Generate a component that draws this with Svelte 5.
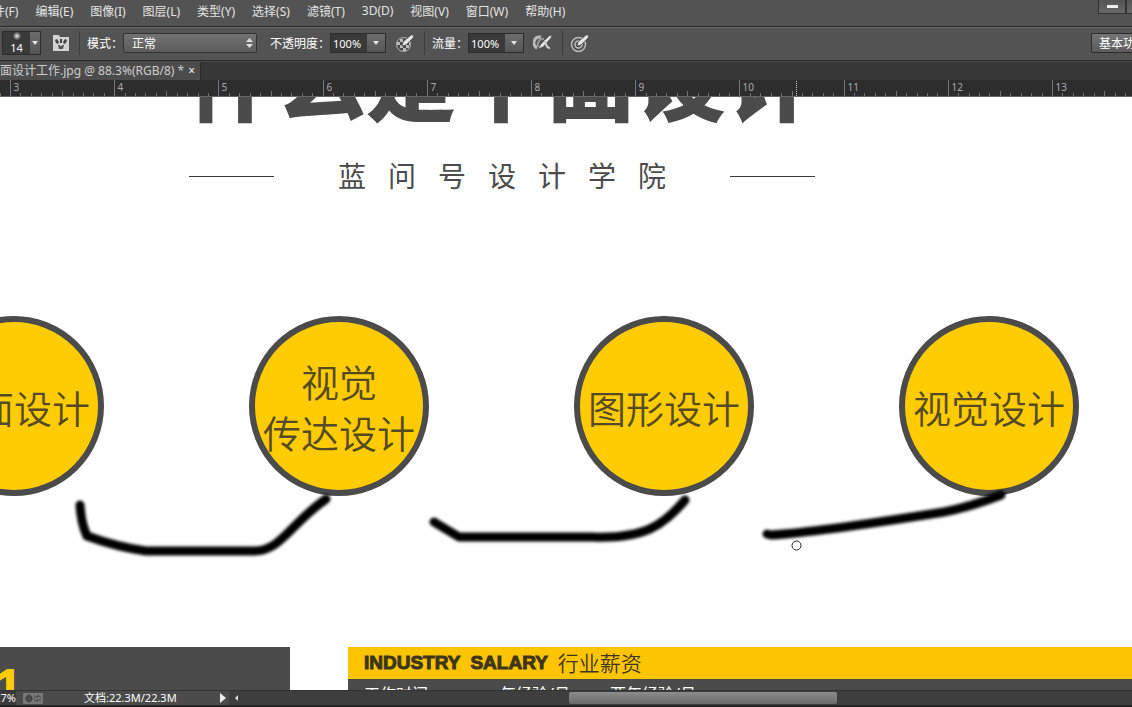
<script lang="ts">
	// Menu bar entries
	const menus: string[] = [
		'文件(F)',
		'编辑(E)',
		'图像(I)',
		'图层(L)',
		'类型(Y)',
		'选择(S)',
		'滤镜(T)',
		'3D(D)',
		'视图(V)',
		'窗口(W)',
		'帮助(H)'
	];

	let mode: string = $state('正常');
	let opacity: string = $state('100%');
	let flow: string = $state('100%');

	// Ruler: one unit at 88.3% zoom
	const unit = 104.2;
	const origin = 10.5;
	const units: number[] = [2, 3, 4, 5, 6, 7, 8, 9, 10, 11, 12, 13];
	const minor: number[] = [1, 2, 3, 4, 5, 6, 7, 8, 9];

	function rulerX(value: number) {
		return Math.round(origin + (value - 3) * unit - 0.5) + 0.5;
	}

	// Lines of text in each circle of the artwork
	const circles: string[][] = [['平面设计'], ['视觉', '传达设计'], ['图形设计'], ['视觉设计']];

	const school: string[] = [...'蓝问号设计学院'];
</script>

<div class="app">
	<header class="menubar">
		<nav>
			{#each menus as menu}
				<button class="menu">{menu}</button>
			{/each}
		</nav>
		<div class="window-buttons">
			<button aria-label="最小化"><i></i></button>
			<button aria-label="还原"></button>
		</div>
	</header>

	<div class="options">
		<button class="brush" aria-label="画笔预设">
			<span class="tip"><i></i>14</span>
			<span class="drop"></span>
		</button>
		<button class="icon panel-icon" aria-label="切换画笔面板">
			<svg width="18" height="18" viewBox="0 0 18 18">
				<path d="M1 1h6l1 2h9v14H1z" fill="#d2d2d2" />
				<path d="M3 6l2-1 2 3-1 2-2-1zM8 5h2v4H8zM13 5l2 1-1 3-2 1-1-2z" fill="#444" />
				<path d="M6 11h2v1h2v-1h2l-1 4H7z" fill="#555" />
			</svg>
		</button>
		<span class="separator"></span>
		<label for="mode">模式：</label>
		<span class="select">
			<select id="mode" bind:value={mode}>
				<option>正常</option>
				<option>溶解</option>
			</select>
			<svg width="7" height="10" viewBox="0 0 7 10">
				<path d="M0 4l3.5-4L7 4zM0 6h7l-3.5 4z" fill="#ddd" />
			</svg>
		</span>
		<label class="opacity-label" for="opacity">不透明度：</label>
		<span class="field">
			<input id="opacity" bind:value={opacity} />
			<button class="drop" aria-label="不透明度滑块"></button>
		</span>
		<button class="icon" aria-label="绘图板压力控制不透明度">
			<svg width="20" height="20" viewBox="0 0 20 20">
				<circle cx="8.5" cy="11.5" r="7" fill="#4a4a4a" stroke="#bbb" />
				<path
					d="M5 6h3v3H5zM11 6h3v3h-3zM2 9h3v3H2zM8 9h3v3H8zM14 9h1v3h-1zM5 12h3v3H5zM11 12h3v3h-3zM8 15h3v3H8z"
					fill="#bbb"
				/>
				<path d="M7 13l1-4 8-7 3 0-1 3-7 7z" fill="#e4e4e4" stroke="#444" stroke-width=".7" />
			</svg>
		</button>
		<span class="separator"></span>
		<label for="flow">流量：</label>
		<span class="field">
			<input id="flow" bind:value={flow} />
			<button class="drop" aria-label="流量滑块"></button>
		</span>
		<button class="icon" aria-label="启用喷枪模式">
			<svg width="20" height="20" viewBox="0 0 20 20" fill="none">
				<path d="M8 4C0 3-1 13 4 15" stroke="#bbb" stroke-width="3" />
				<path d="M11 6C6 5 4 10 5 14" stroke="#999" stroke-width="2" />
				<path d="M5 16l3-5 8-8 3-1-1 3-8 9z" fill="#e4e4e4" stroke="#444" stroke-width=".6" />
				<path d="M11 8c3 1 1 7 6 7" stroke="#ccc" stroke-width="2" />
			</svg>
		</button>
		<span class="separator"></span>
		<button class="icon size-icon" aria-label="绘图板压力控制大小">
			<svg width="20" height="20" viewBox="0 0 20 20" fill="none">
				<circle cx="8.5" cy="11.5" r="7" stroke="#bbb" stroke-width="1.5" />
				<circle cx="8.5" cy="11.5" r="3.5" stroke="#bbb" stroke-width="1.5" />
				<path d="M7 13l1-4 8-7 3 0-1 3-7 7z" fill="#e4e4e4" stroke="#444" stroke-width=".7" />
			</svg>
		</button>
		<button class="workspace">基本功能</button>
	</div>

	<div class="tabs">
		<div class="tab">
			<span>平面设计工作.jpg @ 88.3%(RGB/8) *</span>
			<button aria-label="关闭">×</button>
		</div>
	</div>

	<svg class="ruler" height="17">
		{#each units as value}
			<line x1={rulerX(value)} x2={rulerX(value)} y1="0" y2="17" stroke="#777" />
			<text x={rulerX(value) + 3} y="11">{value}</text>
			{#each minor as step}
				<line
					x1={rulerX(value + step / 10)}
					x2={rulerX(value + step / 10)}
					y1={step === 5 ? 11 : 13}
					y2="17"
					stroke="#707070"
				/>
			{/each}
		{/each}
		<line x1="796.5" x2="796.5" y1="1" y2="17" stroke="#ccc" stroke-dasharray="1 1" />
		<line x1="0" x2="100%" y1="16.5" y2="16.5" stroke="#666" />
	</svg>

	<main class="canvas">
		<h1>什么是平面设计</h1>
		<div class="school">
			<hr />
			<p>
				{#each school as char}<span>{char}</span>{/each}
			</p>
			<hr />
		</div>

		<div class="circles">
			{#each circles as lines}
				<div class="circle">
					{#each lines as line}<span>{line}</span>{/each}
				</div>
			{/each}
		</div>

		<div class="panels">
			<div class="number">01</div>
			<section class="salary">
				<h2><b>INDUSTRY</b> <b>SALARY</b> <span>行业薪资</span></h2>
				<table>
					<thead>
						<tr><th>工作时间</th><th>一年经验/月</th><th>两年经验/月</th></tr>
					</thead>
				</table>
			</section>
		</div>

		<!-- Brush strokes and the brush cursor -->
		<svg class="strokes">
			<defs>
				<filter id="soft" x="-10%" y="-30%" width="120%" height="160%">
					<feGaussianBlur stdDeviation="1.4" />
				</filter>
			</defs>
			<g filter="url(#soft)">
				<path d="M80 408Q81 426 87 439Q117 450 146 454H254C281 454 290 427 326 402" />
				<path d="M434 425L459 440H592C645 442 664 428 685 403" />
				<path d="M767 437L771 438C810 436 900 422 944 415Q970 410 1001 398" />
			</g>
			<circle cx="796.5" cy="448.5" r="4.5" />
		</svg>
	</main>

	<footer class="status">
		<div class="info">
			<span class="zoom">88.27%</span>
			<svg width="20" height="11" viewBox="0 0 20 11">
				<rect width="20" height="11" rx="1" fill="#777" />
				<circle cx="6" cy="5.5" r="2.5" fill="none" stroke="#444" stroke-width="2" />
				<path d="M6 1v9M2 5.5h8" stroke="#444" />
				<path d="M11 4h4V2l3 3M18 7h-4v2l-3-3" fill="none" stroke="#444" />
			</svg>
			<span class="doc">文档:22.3M/22.3M</span>
			<button aria-label="状态栏选项">
				<svg width="6" height="10" viewBox="0 0 6 10"><path d="M0 0l6 5-6 5z" fill="#eee" /></svg>
			</button>
		</div>
		<div class="scroll">
			<svg width="3" height="6" viewBox="0 0 3 6"><path d="M3 0v6L0 3z" fill="#ddd" /></svg>
			<div class="track"><div class="thumb"></div></div>
		</div>
	</footer>
</div>

<style>
	:global(body) {
		background: #535353;
	}

	.app {
		display: flex;
		flex-direction: column;
		height: 100vh;
		overflow: hidden;
		font-family: 'Noto Sans', 'Noto Sans CJK SC', sans-serif;
		font-size: 12px;
		color: #e4e4e4;
		background: #535353;
	}

	button,
	input,
	select {
		box-sizing: border-box;
		margin: 0;
		padding: 0;
		border: none;
		background: none;
		color: inherit;
		font: inherit;
	}

	svg {
		display: block;
		flex: none;
	}

	.menubar {
		display: flex;
		flex: none;
		justify-content: space-between;
		height: 26px;
		border-bottom: 1px solid #2a2a2a;
	}

	nav {
		display: flex;
		gap: 17px;
		height: 21px;
		margin-left: -19px;
	}

	.menu {
		white-space: nowrap;
	}

	.window-buttons {
		display: flex;
		height: 14px;
		margin-right: -22px;
	}

	.window-buttons button {
		display: flex;
		align-items: center;
		justify-content: center;
		width: 28px;
		border: 1px solid #333;
		border-top: none;
		background: linear-gradient(#555, #686868);
	}

	.window-buttons i {
		width: 11px;
		height: 3px;
		background: #eee;
	}

	.options {
		display: flex;
		flex: none;
		align-items: center;
		box-sizing: border-box;
		height: 34px;
		padding: 0 0 2px 2px;
		border-top: 1px solid #686868;
		border-bottom: 1px solid #2a2a2a;
		color: #fff;
		white-space: nowrap;
	}

	.brush {
		display: flex;
		width: 39px;
		height: 24px;
		border: 1px solid #2c2c2c;
		background: #3a3a3a;
		font-size: 11px;
		line-height: 12px;
	}

	.tip {
		display: flex;
		flex: 1;
		flex-direction: column;
		align-items: center;
		gap: 2px;
	}

	.tip i {
		width: 8px;
		height: 8px;
		border-radius: 50%;
		background: radial-gradient(#eee, #3a3a3a 75%);
	}

	.drop {
		display: flex;
		align-items: center;
		justify-content: center;
		width: 18px;
		background: linear-gradient(#6c6c6c, #555);
	}

	.brush .drop {
		width: 10px;
	}

	.drop::after {
		content: '';
		border: 3px solid transparent;
		border-top: 4px solid #e4e4e4;
		border-bottom: none;
	}

	.icon {
		margin: 0 9px;
	}

	.panel-icon {
		margin-left: 11px;
	}

	.size-icon {
		margin-left: 0;
	}

	.separator {
		width: 1px;
		height: 24px;
		margin-right: 7px;
		background: #3c3c3c;
	}

	.select {
		display: flex;
		align-items: center;
	}

	.select select {
		width: 134px;
		height: 20px;
		padding-left: 8px;
		border: 1px solid #333;
		border-radius: 2px;
		appearance: none;
		background: linear-gradient(#727272, #5c5c5c);
	}

	.select svg {
		margin-left: -11px;
		margin-right: 4px;
		pointer-events: none;
	}

	.opacity-label {
		margin-left: 13px;
	}

	.field {
		display: flex;
		height: 20px;
		box-sizing: border-box;
		border: 1px solid #2c2c2c;
	}

	.field input {
		width: 36px;
		padding-left: 2px;
		background: #393939;
		font-size: 11px;
	}

	.workspace {
		width: 80px;
		height: 20px;
		margin-left: auto;
		margin-right: -39px;
		padding-left: 7px;
		border: 1px solid #2c2c2c;
		border-radius: 2px;
		background: linear-gradient(#757575, #5c5c5c);
		text-align: left;
	}

	.tabs {
		display: flex;
		flex: none;
		height: 18px;
		border-top: 1px solid #4a4a4a;
		background: #373737;
	}

	.tab {
		display: flex;
		align-items: center;
		gap: 4px;
		margin-left: -12px;
		padding-right: 5px;
		border-right: 1px solid #2a2a2a;
		background: #4c4c4c;
		color: #ccc;
		line-height: 18px;
		white-space: nowrap;
	}

	.tab button {
		color: #eee;
	}

	.ruler {
		width: 100%;
		background: #2d2d2d;
	}

	.ruler text {
		fill: #aaa;
		font-size: 10px;
	}

	.canvas {
		position: relative;
		flex: 1;
		min-height: 0;
		overflow: hidden;
		background: #fff;
		color: #4b4b4b;
	}

	h1 {
		height: 96px;
		margin: -70px 0 0 186px;
		font-family: 'Noto Sans CJK SC', sans-serif;
		font-size: 90px;
		font-weight: 900;
		line-height: 96px;
		white-space: nowrap;
	}

	.school {
		display: flex;
		align-items: center;
		justify-content: space-between;
		width: 626px;
		height: 40px;
		margin: 33px 0 0 189px;
	}

	.school hr {
		width: 85px;
		margin: 0;
		border: none;
		border-top: 1px solid #3c3c3c;
	}

	.school p {
		display: flex;
		gap: 22px;
		margin: 0;
		font-size: 28px;
		line-height: 40px;
	}

	.circles {
		display: flex;
		gap: 145px;
		margin: 120px 0 0 -76px;
	}

	.circle {
		display: flex;
		flex: none;
		flex-direction: column;
		align-items: center;
		justify-content: center;
		box-sizing: border-box;
		width: 180px;
		height: 180px;
		border: 6px solid #4b4b4b;
		border-radius: 50%;
		background: #fecc00;
		color: #564a24;
		font-family: 'Noto Sans CJK SC', sans-serif;
		font-size: 38px;
		font-weight: 350;
		line-height: 51px;
		white-space: nowrap;
	}

	.panels {
		display: flex;
		gap: 58px;
		margin-top: 151px;
	}

	.number {
		display: flex;
		flex: none;
		box-sizing: border-box;
		width: 290px;
		height: 90px;
		padding-top: 14px;
		background: #4b4b4b;
		color: #fecc00;
		font-family: 'Liberation Sans', sans-serif;
		font-size: 42px;
		font-weight: bold;
		line-height: 48px;
		text-indent: -26px;
		-webkit-text-stroke: 2px #fecc00;
	}

	.salary {
		flex: 1;
		height: 90px;
		background: #4b4b4b;
	}

	h2 {
		display: flex;
		align-items: center;
		gap: 10px;
		height: 32px;
		margin: 0;
		padding-left: 16px;
		background: #fdc500;
		color: #3f351a;
		font-weight: normal;
	}

	h2 b {
		font-family: 'Liberation Sans', sans-serif;
		font-size: 19px;
		-webkit-text-stroke: 1px #3f351a;
	}

	h2 span {
		font-size: 21px;
		font-weight: 350;
		line-height: 28px;
	}

	table {
		border-collapse: collapse;
		margin-left: 16px;
		color: #fff;
		font-size: 16px;
		line-height: 30px;
	}

	th {
		padding: 0 40px 0 0;
		font-weight: normal;
		white-space: nowrap;
	}

	th:first-child {
		padding-right: 56px;
	}

	.strokes {
		position: absolute;
		inset: 0;
		width: 100%;
		height: 100%;
		fill: none;
		pointer-events: none;
	}

	.strokes path {
		stroke: #000;
		stroke-width: 9px;
		stroke-linecap: round;
		stroke-linejoin: round;
	}

	.strokes circle {
		stroke: #222;
	}

	.status {
		display: flex;
		flex: none;
		box-sizing: border-box;
		height: 17px;
		border-top: 1px solid #333;
		border-bottom: 2px solid #242424;
		background: #3e3e3e;
		color: #fff;
		font-size: 11px;
		line-height: 14px;
	}

	.info {
		display: flex;
		align-items: center;
		box-sizing: border-box;
		width: 229px;
		background: #4b4b4b;
	}

	.zoom {
		display: flex;
		justify-content: flex-end;
		width: 16px;
		margin-right: 7px;
		background: #3a3a3a;
	}

	.doc {
		flex: 1;
		margin-left: 41px;
	}

	.info button {
		margin-right: 3px;
	}

	.scroll {
		display: flex;
		flex: 1;
		align-items: center;
		padding-left: 6px;
	}

	.track {
		flex: 1;
	}

	.thumb {
		width: 30%;
		height: 12px;
		margin-left: 37%;
		border-radius: 2px;
		background: linear-gradient(#8c8c8c, #6a6a6a);
	}
</style>
